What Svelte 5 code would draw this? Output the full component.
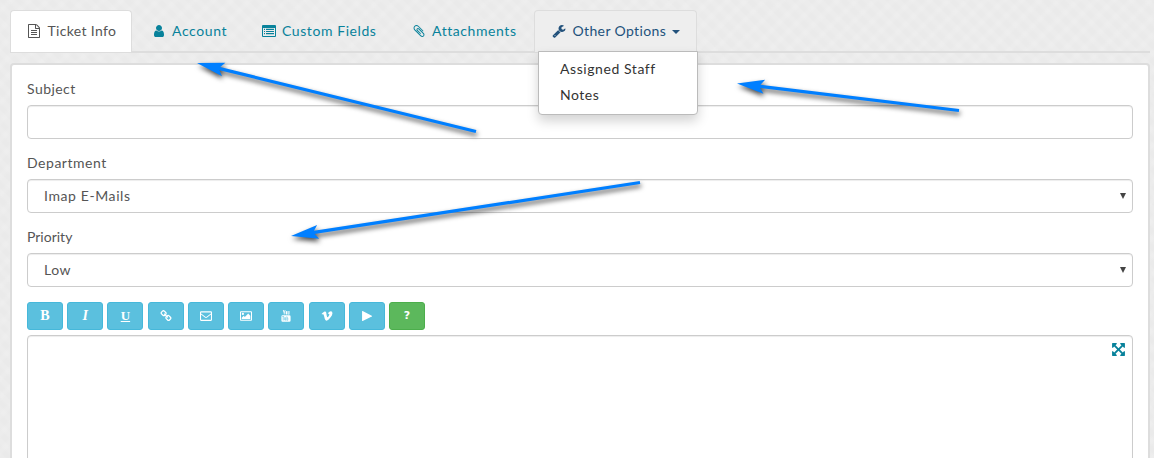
<script>
  const paths = {
    file: 'M1596 380q28 28 48 76t20 88v1152q0 40-28 68t-68 28h-1344q-40 0-68-28t-28-68v-1600q0-40 28-68t68-28h896q40 0 88 20t76 48zm-444-244v376h376q-10-29-22-41l-313-313q-12-12-41-22zm384 1528v-1024h-416q-40 0-68-28t-28-68v-416h-768v1536h1280zm-1024-864q0-14 9-23t23-9h704q14 0 23 9t9 23v64q0 14-9 23t-23 9h-704q-14 0-23-9t-9-23v-64zm736 224q14 0 23 9t9 23v64q0 14-9 23t-23 9h-704q-14 0-23-9t-9-23v-64q0-14 9-23t23-9h704zm0 256q14 0 23 9t9 23v64q0 14-9 23t-23 9h-704q-14 0-23-9t-9-23v-64q0-14 9-23t23-9h704z',
    user: 'M1536 1399q0 109-62.5 187t-150.5 78h-854q-88 0-150.5-78t-62.5-187q0-85 8.5-160.5t31.5-152 58.5-131 94-89 134.5-34.5q131 128 313 128t313-128q76 0 134.5 34.5t94 89 58.5 131 31.5 152 8.5 160.5zm-256-887q0 159-112.5 271.5t-271.5 112.5-271.5-112.5-112.5-271.5 112.5-271.5 271.5-112.5 271.5 112.5 112.5 271.5z',
    list: 'M130 128h1532q130 0 130 130v1276q0 130-130 130h-1532q-130 0-130-130v-1276q0-130 130-130zM128 500v1036h1536v-1036zM256 620h128v140h-128zM512 620h1024v140h-1024zM256 890h128v140h-128zM512 890h1024v140h-1024zM256 1160h128v140h-128zM512 1160h1024v140h-1024z',
    clip: 'M1596 1385q0 117-79 196t-196 79q-135 0-235-100l-777-776q-113-115-113-271 0-159 110-270t269-111q158 0 273 113l605 606q10 10 10 22 0 16-30.5 46.5t-46.5 30.5q-13 0-23-10l-606-607q-79-77-181-77-106 0-179 75t-73 181q0 105 76 181l776 777q63 63 145 63 64 0 106-42t42-106q0-82-63-145l-581-581q-26-24-60-24-29 0-48 19t-19 48q0 32 25 59l410 410q10 10 10 22 0 16-31 47t-47 31q-12 0-22-10l-410-410q-63-61-63-149 0-82 57-139t139-57q88 0 149 63l581 581q100 98 100 235z',
    wrench: 'M448 1472q0-26-19-45t-45-19-45 19-19 45 19 45 45 19 45-19 19-45zm644-420l-682 682q-37 37-90 37-52 0-91-37l-106-108q-38-36-38-90 0-53 38-91l681-681q39 98 114.5 173.5t173.5 114.5zm634-435q0 39-23 106-47 134-164.5 217.5t-258.5 83.5q-185 0-316.5-131.5t-131.5-316.5 131.5-316.5 316.5-131.5q58 0 121.5 16.5t107.5 46.5q16 11 16 28t-16 28l-293 169v224l193 107q5-3 79-48.5t135.5-81 70.5-35.5q15 0 23.5 10t8.5 25z',
    expand: 'M1411 541l-355 355 355 355 144-144q29-31 70-14 39 17 39 59v448q0 26-19 45t-45 19h-448q-42 0-59-40-17-39 14-69l144-144-355-355-355 355 144 144q31 30 14 69-17 40-59 40h-448q-26 0-45-19t-19-45v-448q0-42 40-59 39-17 69 14l144 144 355-355-355-355-144 144q-19 19-45 19-12 0-24-5-40-17-40-59v-448q0-26 19-45t45-19h448q42 0 59 40 17 39-14 69l-144 144 355 355 355-355-144-144q-31-30-14-69 17-40 59-40h448q26 0 45 19t19 45v448q0 42-39 59-13 5-25 5-26 0-45-19z',
    link: 'M1520 1216q0-40-28-68l-208-208q-28-28-68-28-42 0-72 32 3 3 19 18.5t21.5 21.5 15 19 13 25.5 3.5 27.5q0 40-28 68t-68 28q-15 0-27.5-3.5t-25.5-13-19-15-21.5-21.5-18.5-19q-33 31-33 73 0 40 28 68l206 207q27 27 68 27 40 0 68-26l147-146q28-28 28-67zm-703-705q0-40-28-68l-206-207q-28-28-68-28-39 0-68 27l-147 146q-28 28-28 67 0 40 28 68l208 208q27 27 68 27 42 0 72-31-3-3-19-18.5t-21.5-21.5-15-19-13-25.5-3.5-27.5q0-40 28-68t68-28q15 0 27.5 3.5t25.5 13 19 15 21.5 21.5 18.5 19q33-31 33-73zm895 705q0 120-85 203l-147 146q-83 83-203 83-121 0-204-85l-206-207q-83-83-83-203 0-123 88-209l-88-88q-86 88-208 88-120 0-204-84l-208-208q-84-84-84-204t85-203l147-146q83-83 203-83 121 0 204 85l206 207q83 83 83 203 0 123-88 209l88 88q86-88 208-88 120 0 204 84l208 208q84 84 84 204z',
    mail: 'M160 200h1472q160 0 160 160v1112q0 160-160 160h-1472q-160 0-160-160v-1112q0-160 160-160zM160 680v772q0 20 20 20h1432q20 0 20-20v-772l-570 440q-166 120-332 0zM160 370v100q0 60 60 105l590 440q86 60 172 0l590-440q60-45 60-105v-100z',
    image: 'M130 192h1532q130 0 130 130v1148q0 130-130 130h-1532q-130 0-130-130v-1148q0-130 130-130zM150 342v1108h1492v-1108zM600 590a170 170 0 1 1-340 0a170 170 0 1 1 340 0zM256 1340v-190l290-290 180 180 500-500 310 310v490z',
    youtube: 'M420 0h130l80 290 80-290h120l-145 440v250h-120v-250zM850 250q0-100 100-100t100 100v340q0 100-100 100t-100-100zM1130 160h110v400q0 40 60 0v-400h110v530h-110v-50q-170 130-170-50zM380 790h1030q170 0 170 170v600q0 190-170 190h-1030q-170 0-170-190v-600q0-170 170-170zM320 920v90h100v560h95v-560h100v-90zM670 1100v380q0 120 150 30v60h80v-470h-80v350q-60 60-60 0v-350zM990 920v650h80v-45q150 110 150-60v-240q0-170-150-70v-235zM1070 1210q70-50 70 50v180q0 100-70 50z',
    vimeo: 'M1709 518q-10 236-332 651-333 431-562 431-142 0-240-263-44-160-132-482-72-262-157-262-18 0-127 76l-77-98q24-21 108-96.5t130-115.5q156-138 241-146 95-9 153 55.5t81 203.5q44 287 66 373 55 249 120 249 51 0 154-161 101-161 109-246 13-139-109-139-57 0-121 26 120-393 459-382 251 8 236 326z',
    play: 'M250 140l1360 700q80 56 0 112l-1360 700q-90 30-90-56v-1400q0-86 90-56z'
  };

  const tabs = [
    { key: 'info', icon: 'file', label: 'Ticket Info' },
    { key: 'account', icon: 'user', label: 'Account' },
    { key: 'fields', icon: 'list', label: 'Custom Fields' },
    { key: 'attach', icon: 'clip', label: 'Attachments' },
    { key: 'other', icon: 'wrench', label: 'Other Options' }
  ];
  const tools = ['B', 'I', 'U', 'link', 'mail', 'image', 'youtube', 'vimeo', 'play', '?'];
  const arrows = [
    { tip: [197, 63], end: [476, 131.5] },
    { tip: [291, 236], end: [640, 182.5] },
    { tip: [737, 83.5], end: [959, 110.5] }
  ].map(({ tip, end }) => {
    const dx = end[0] - tip[0];
    const dy = end[1] - tip[1];
    return { tip, length: Math.hypot(dx, dy), angle: (Math.atan2(dy, dx) * 180) / Math.PI };
  });
</script>

{#snippet icon(name)}
  <svg class="icon" viewBox="0 0 1792 1792" aria-hidden="true"><path fill-rule="evenodd" d={paths[name]} /></svg>
{/snippet}

<main>
  <nav>
    {#each tabs as tab}
      <div class="tab {tab.key}">
        <span class="glyph">{@render icon(tab.icon)}</span>
        <span class="label">{tab.label}</span>
        {#if tab.key === 'other'}
          <i class="caret"></i>
          <div class="menu">
            <div class="assigned">Assigned Staff</div>
            <div class="notes">Notes</div>
          </div>
        {/if}
      </div>
    {/each}
  </nav>

  <section>
    <div class="name subject">Subject</div>
    <div class="field"></div>
    <div class="name department">Department</div>
    <div class="field"><span class="imap">Imap E-Mails</span><i class="down"></i></div>
    <div class="name priority">Priority</div>
    <div class="field"><span class="low">Low</span><i class="down"></i></div>
    <div class="tools">
      {#each tools as tool}
        <div class="tool" class:help={tool === '?'}>
          {#if tool.length === 1}
            <b class:italic={tool === 'I'} class:under={tool === 'U'}>{tool}</b>
          {:else}
            {@render icon(tool)}
          {/if}
        </div>
      {/each}
    </div>
    <div class="editor">{@render icon('expand')}</div>
  </section>

  <svg class="arrows" viewBox="0 0 1154 458" aria-hidden="true">
    {#each arrows as a}
      <g transform="translate({a.tip[0]} {a.tip[1]}) rotate({a.angle})">
        <path d="M0 0L27.500 -7L23.500 -1.600H{a.length}V1.600H23.500L27.500 7Z" />
      </g>
    {/each}
  </svg>
</main>

<style>
  :global(body) { margin: 0; overflow: hidden; }
  main {
    position: relative;
    box-sizing: border-box;
    height: 458px;
    padding: 10px 4px 0 10px;
    overflow: hidden;
    font: 14px/20px Lato, sans-serif;
    color: #555;
    background:
      repeating-linear-gradient(45deg, rgba(255,255,255,.1) 0 3px, transparent 5px 8px, rgba(255,255,255,.1) 11px),
      repeating-linear-gradient(-45deg, rgba(255,255,255,.1) 0 2px, transparent 5px 10px, rgba(255,255,255,.1) 13px),
      #eaeaea;
  }
  nav {
    display: grid;
    grid-template-columns: 122px 4px 109px 149px 140px 163px;
    height: 41px;
    border-bottom: 2px solid #ddd;
  }
  .tab {
    position: relative;
    display: flex;
    align-items: center;
    box-sizing: border-box;
    height: 42px;
    padding: 0 0 1px 18px;
    color: #08829b;
    white-space: nowrap;
  }
  .info,
  .other {
    border: 1px solid #ddd;
    border-bottom: 0;
    border-radius: 4px 4px 0 0;
    padding: 0 0 2px 17px;
  }
  .info { color: #555; background: #fff; }
  .other { color: #23527c; background: #eee; }
  .account { grid-column: 3; }
  .fields { padding-left: 17px; }
  .icon { display: block; width: 14px; height: 14px; fill: currentColor; }
  .glyph { width: 20px; flex: none; }
  .info .glyph { width: 19.5px; }
  .info .icon { margin-left: -1px; }
  .account .glyph { width: 18px; }
  .account .icon { margin-left: -2px; }
  .other .glyph { width: 20.5px; }
  .caret { margin: 2px 0 0 6px; border: 4px solid transparent; border-top-color: currentColor; border-bottom: 0; }
  .info .label { letter-spacing: .34px; }
  .account .label { letter-spacing: .6px; }
  .fields .label { letter-spacing: .58px; }
  .attach .label { letter-spacing: .57px; }
  .other .label { letter-spacing: .37px; }
  .assigned { letter-spacing: .57px; }
  .notes { letter-spacing: .5px; }
  .subject { letter-spacing: .45px; }
  .department { letter-spacing: .53px; }
  .imap { letter-spacing: .6px; }
  .low { letter-spacing: .5px; }
  .menu {
    position: absolute;
    z-index: 2;
    left: 3px;
    top: 40px;
    box-sizing: border-box;
    width: 160px;
    height: 64px;
    padding: 4px 0 0 21px;
    line-height: 26px;
    color: #333;
    background: #fff;
    border: 1px solid #bbb;
    border-radius: 0 0 4px 4px;
    box-shadow: 0 6px 12px rgba(0,0,0,.175);
  }
  section {
    box-sizing: border-box;
    height: 420px;
    margin-top: 10px;
    padding: 14px 15px 0;
    background: #fff;
    border: 2px solid #ddd;
    border-radius: 4px;
  }
  .name { height: 20px; margin-bottom: 6px; }
  .field {
    display: flex;
    align-items: center;
    justify-content: space-between;
    box-sizing: border-box;
    height: 34px;
    padding: 0 6px 0 16px;
    margin-bottom: 14px;
    border: 1px solid #ccc;
    border-radius: 4px;
    box-shadow: inset 0 1px 1px rgba(0,0,0,.075);
  }
  .down { border: 3px solid transparent; border-top: 6px solid #444; border-bottom: 0; }
  .tools { display: flex; gap: 4.22px; padding-top: 1px; }
  .tool {
    display: flex;
    align-items: center;
    justify-content: center;
    box-sizing: border-box;
    width: 36px;
    height: 28px;
    color: #fff;
    background: #5bc0de;
    border: 1px solid #46b8da;
    border-radius: 3px;
  }
  .tool .icon { width: 12px; height: 12px; }
  .tool b { font: bold 14px/14px "Liberation Serif", serif; }
  .tool .italic { font-style: italic; }
  .tool .under { font-size: 13px; text-decoration: underline; text-underline-offset: 1px; }
  .help { background: #5cb85c; border-color: #4cae4c; }
  .tool.help b { font: bold 11px/14px "DejaVu Sans", sans-serif; }
  .editor {
    display: flex;
    justify-content: flex-end;
    box-sizing: border-box;
    height: 150px;
    margin-top: 5px;
    padding: 6px 6px 0 0;
    color: #08829b;
    border: 1px solid #ccc;
    border-radius: 4px;
    box-shadow: inset 0 1px 1px rgba(0,0,0,.075);
  }
  .editor .icon { width: 15px; height: 15px; }
  .arrows {
    position: absolute;
    z-index: 3;
    left: 0;
    top: 0;
    width: 1154px;
    height: 458px;
    fill: #007fff;
    filter: drop-shadow(1px 3px 2.500px rgba(0,0,0,.7));
  }
</style>
